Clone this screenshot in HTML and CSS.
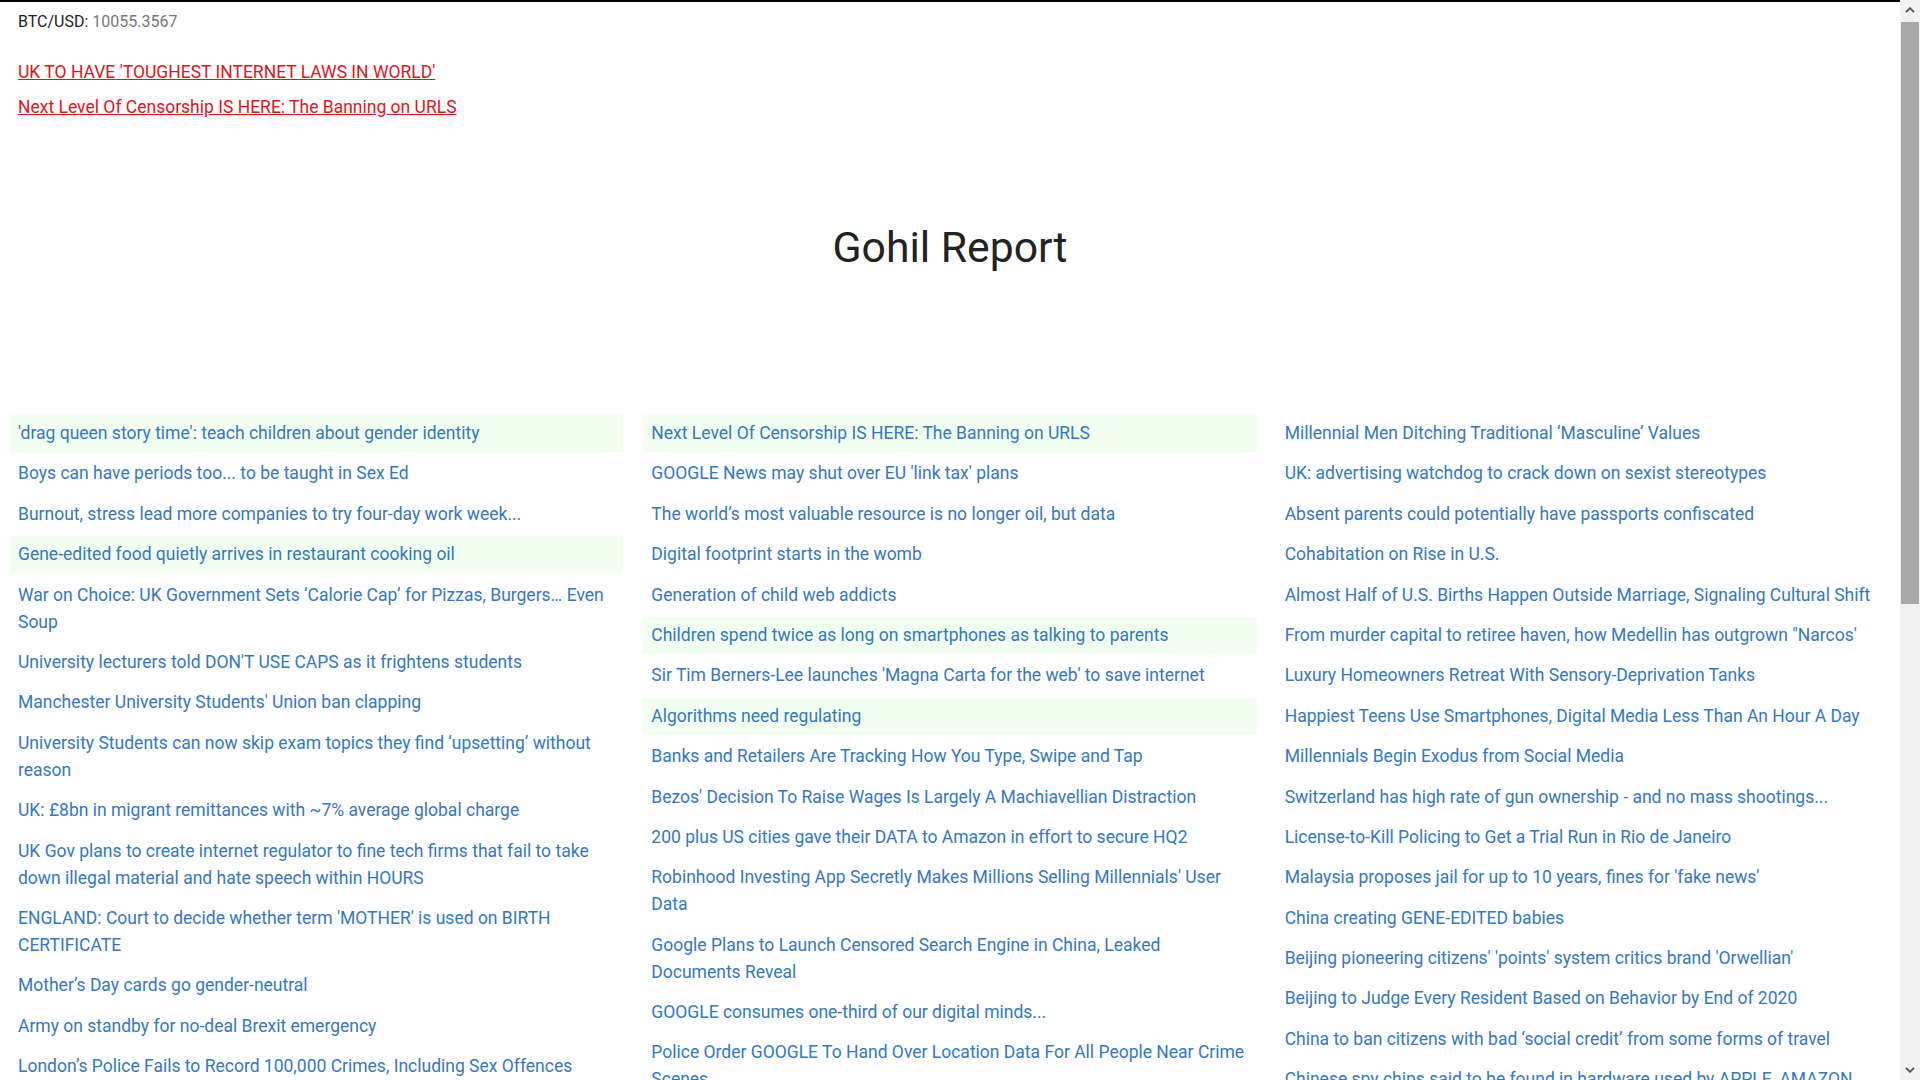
FILE: index.html
```html
<!DOCTYPE html>
<html lang="en">
<head>
<meta charset="utf-8">
<title>Gohil Report</title>
<link rel="stylesheet" href="styles.css">
</head>
<body>
<div class="page">
  <div class="ticker">BTC/USD: <span class="price">10055.3567</span></div>
  <div class="alerts">
    <a class="alert" href="#">UK TO HAVE 'TOUGHEST INTERNET LAWS IN WORLD'</a>
    <a class="alert" href="#">Next Level Of Censorship IS HERE: The Banning on URLS</a>
  </div>
  <h1 class="title">Gohil Report</h1>
  <div class="columns">
    <ul class="col">
      <li class="item hl"><a href="#">'drag queen story time': teach children about gender identity</a></li>
      <li class="item"><a href="#">Boys can have periods too... to be taught in Sex Ed</a></li>
      <li class="item"><a href="#">Burnout, stress lead more companies to try four-day work week...</a></li>
      <li class="item hl"><a href="#">Gene-edited food quietly arrives in restaurant cooking oil</a></li>
      <li class="item"><a href="#">War on Choice: UK Government Sets ‘Calorie Cap’ for Pizzas, Burgers… Even Soup</a></li>
      <li class="item"><a href="#">University lecturers told DON'T USE CAPS as it frightens students</a></li>
      <li class="item"><a href="#">Manchester University Students' Union ban clapping</a></li>
      <li class="item"><a href="#">University Students can now skip exam topics they find ‘upsetting’ without reason</a></li>
      <li class="item"><a href="#">UK: £8bn in migrant remittances with ~7% average global charge</a></li>
      <li class="item"><a href="#">UK Gov plans to create internet regulator to fine tech firms that fail to take down illegal material and hate speech within HOURS</a></li>
      <li class="item"><a href="#">ENGLAND: Court to decide whether term 'MOTHER' is used on BIRTH CERTIFICATE</a></li>
      <li class="item"><a href="#">Mother’s Day cards go gender-neutral</a></li>
      <li class="item"><a href="#">Army on standby for no-deal Brexit emergency</a></li>
      <li class="item"><a href="#">London’s Police Fails to Record 100,000 Crimes, Including Sex Offences</a></li>
    </ul>
    <ul class="col">
      <li class="item hl"><a href="#">Next Level Of Censorship IS HERE: The Banning on URLS</a></li>
      <li class="item"><a href="#">GOOGLE News may shut over EU 'link tax' plans</a></li>
      <li class="item"><a href="#">The world’s most valuable resource is no longer oil, but data</a></li>
      <li class="item"><a href="#">Digital footprint starts in the womb</a></li>
      <li class="item"><a href="#">Generation of child web addicts</a></li>
      <li class="item hl"><a href="#">Children spend twice as long on smartphones as talking to parents</a></li>
      <li class="item"><a href="#">Sir Tim Berners-Lee launches 'Magna Carta for the web' to save internet</a></li>
      <li class="item hl"><a href="#">Algorithms need regulating</a></li>
      <li class="item"><a href="#">Banks and Retailers Are Tracking How You Type, Swipe and Tap</a></li>
      <li class="item"><a href="#">Bezos' Decision To Raise Wages Is Largely A Machiavellian Distraction</a></li>
      <li class="item"><a href="#">200 plus US cities gave their DATA to Amazon in effort to secure HQ2</a></li>
      <li class="item"><a href="#">Robinhood Investing App Secretly Makes Millions Selling Millennials' User Data</a></li>
      <li class="item"><a href="#">Google Plans to Launch Censored Search Engine in China, Leaked Documents Reveal</a></li>
      <li class="item"><a href="#">GOOGLE consumes one-third of our digital minds...</a></li>
      <li class="item"><a href="#">Police Order GOOGLE To Hand Over Location Data For All People Near Crime Scenes</a></li>
    </ul>
    <ul class="col">
      <li class="item"><a href="#">Millennial Men Ditching Traditional ‘Masculine’ Values</a></li>
      <li class="item"><a href="#">UK: advertising watchdog to crack down on sexist stereotypes</a></li>
      <li class="item"><a href="#">Absent parents could potentially have passports confiscated</a></li>
      <li class="item"><a href="#">Cohabitation on Rise in U.S.</a></li>
      <li class="item"><a href="#">Almost Half of U.S. Births Happen Outside Marriage, Signaling Cultural Shift</a></li>
      <li class="item"><a href="#">From murder capital to retiree haven, how Medellin has outgrown "Narcos'</a></li>
      <li class="item"><a href="#">Luxury Homeowners Retreat With Sensory-Deprivation Tanks</a></li>
      <li class="item"><a href="#">Happiest Teens Use Smartphones, Digital Media Less Than An Hour A Day</a></li>
      <li class="item"><a href="#">Millennials Begin Exodus from Social Media</a></li>
      <li class="item"><a href="#">Switzerland has high rate of gun ownership - and no mass shootings...</a></li>
      <li class="item"><a href="#">License-to-Kill Policing to Get a Trial Run in Rio de Janeiro</a></li>
      <li class="item"><a href="#">Malaysia proposes jail for up to 10 years, fines for 'fake news'</a></li>
      <li class="item"><a href="#">China creating GENE-EDITED babies</a></li>
      <li class="item"><a href="#">Beijing pioneering citizens' 'points' system critics brand 'Orwellian'</a></li>
      <li class="item"><a href="#">Beijing to Judge Every Resident Based on Behavior by End of 2020</a></li>
      <li class="item"><a href="#">China to ban citizens with bad ‘social credit’ from some forms of travel</a></li>
      <li class="item"><a href="#">Chinese spy chips said to be found in hardware used by APPLE, AMAZON</a></li>
    </ul>
  </div>
</div>
<div class="scrollbar" aria-hidden="true">
  <div class="sb-btn">
    <svg width="10" height="6" viewBox="0 0 10 6"><path d="M1 5.2 L5 1.2 L9 5.2" fill="none" stroke="#505050" stroke-width="1.8"/></svg>
  </div>
  <div class="sb-track"><div class="sb-thumb"></div></div>
  <div class="sb-btn">
    <svg width="10" height="6" viewBox="0 0 10 6"><path d="M1 0.8 L5 4.8 L9 0.8" fill="none" stroke="#505050" stroke-width="1.8"/></svg>
  </div>
</div>
</body>
</html>
```

FILE: styles.css
```css
html, body {
  margin: 0;
  padding: 0;
  height: 100%;
  overflow: hidden;
}
body {
  display: flex;
  font-family: Roboto, "Liberation Sans", Arial, sans-serif;
  color: #222;
  background: #fff;
}
.page {
  flex: 1;
  min-width: 0;
  height: 100%;
  overflow: hidden;
  border-top: 2px solid #000;
}
.ticker {
  padding: 9px 18px 0;
  font-size: 16px;
  line-height: 22px;
  color: #222;
}
.price {
  color: #777;
}
.alerts {
  padding: 26px 18px 0;
  display: flex;
  flex-direction: column;
  align-items: flex-start;
  gap: 8px;
}
.alert {
  color: #e3141c;
  font-size: 17.5px;
  line-height: 27px;
  text-decoration: underline;
}
.title {
  margin: 0;
  padding: 98px 0 0;
  text-align: center;
  font-size: 42.7px;
  line-height: 56px;
  font-weight: 400;
  color: #222;
}
.columns {
  display: grid;
  grid-template-columns: repeat(3, 1fr);
  column-gap: 20px;
  padding: 140px 10px 0 10px;
  align-items: start;
}
.col {
  list-style: none;
  margin: 0;
  padding: 0;
}
.item {
  padding: 5px 8px;
  margin-bottom: 3.4px;
  font-size: 17.5px;
  line-height: 27px;
}
.item.hl {
  background: #f2fff0;
}
.item a {
  color: #3479bf;
  text-decoration: none;
}
.scrollbar {
  width: 20px;
  height: 100%;
  flex: none;
  display: flex;
  flex-direction: column;
  background: #f1f1f1;
}
.sb-btn {
  height: 20px;
  flex: none;
  display: flex;
  align-items: center;
  justify-content: center;
}
.sb-track {
  flex: 1;
  padding: 2px 1px 0;
}
.sb-thumb {
  height: 582px;
  background: #a8a8a8;
}
```
